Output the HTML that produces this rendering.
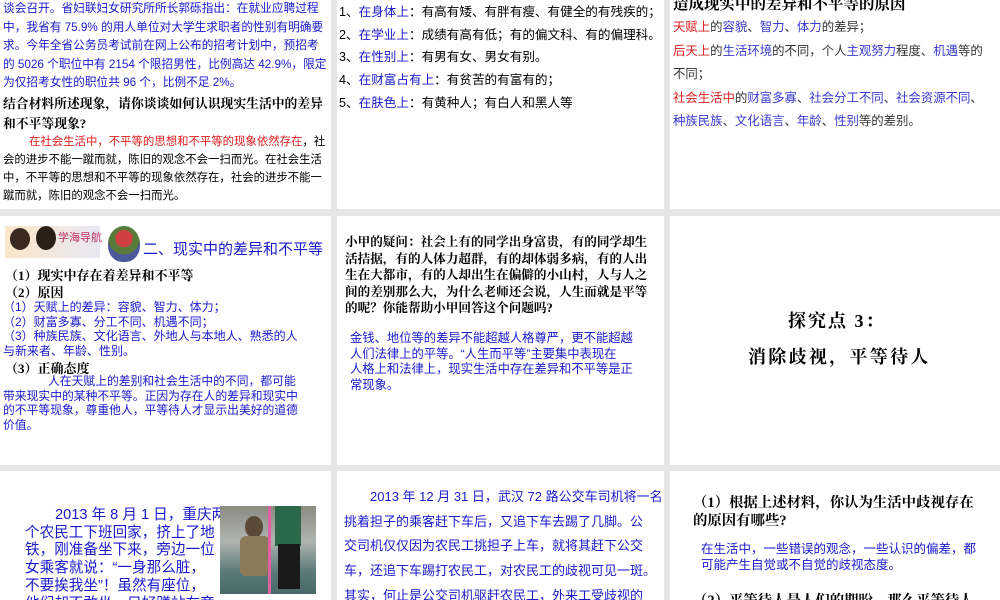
<!DOCTYPE html>
<html><head><meta charset="utf-8"><style>
*{margin:0;padding:0;box-sizing:border-box}
body{width:1000px;height:600px;background:#e6e6e6;position:relative;overflow:hidden;font-family:"Liberation Sans","Noto Sans CJK SC",sans-serif}
.p{position:absolute;background:#fff;overflow:hidden}
.a{position:absolute;white-space:nowrap}
.b{color:#1a1acc}.r{color:#e02020}.k{color:#000}.bl{color:#3a3ad0}
.s{font-family:"Liberation Serif","Noto Serif CJK SC",serif;font-weight:bold}
</style></head><body>

<div class="p" style="left:0;top:0;width:331px;height:209px">
 <div class="a b" style="left:3px;top:0px;font-size:11.7px;line-height:18.5px">谈会召开。省妇联妇女研究所所长郭砾指出：在就业应聘过程<br>中，我省有 75.9% 的用人单位对大学生求职者的性别有明确要<br>求。今年全省公务员考试前在网上公布的招考计划中，预招考<br>的 5026 个职位中有 2154 个限招男性，比例高达 42.9%，限定<br>为仅招考女性的职位共 96 个，比例不足 2%。</div>
 <div class="a k s" style="left:3px;top:94px;font-size:12.8px;line-height:20px">结合材料所述现象，请你谈谈如何认识现实生活中的差异<br>和不平等现象?</div>
 <div class="a k" style="left:3px;top:133px;font-size:11.4px;line-height:18px"><span style="padding-left:26px" class="r">在社会生活中，不平等的思想和不平等的现象依然存在</span>，社<br>会的进步不能一蹴而就，陈旧的观念不会一扫而光。在社会生活<br>中，不平等的思想和不平等的现象依然存在，社会的进步不能一<br>蹴而就，陈旧的观念不会一扫而光。</div>
</div>

<div class="p" style="left:337px;top:0;width:327px;height:209px">
 <div class="a k" style="left:2px;top:1px;font-size:12.6px;line-height:22.7px">1、<span class="b">在身体上</span>：有高有矮、有胖有瘦、有健全的有残疾的；<br>2、<span class="b">在学业上</span>：成绩有高有低；有的偏文科、有的偏理科。<br>3、<span class="b">在性别上</span>：有男有女、男女有别。<br>4、<span class="b">在财富占有上</span>：有贫苦的有富有的；<br>5、<span class="b">在肤色上</span>：有黄种人；有白人和黑人等</div>
</div>

<div class="p" style="left:670px;top:0;width:330px;height:209px">
 <div class="a k s" style="left:3px;top:-8px;font-size:15.5px">造成现实中的差异和不平等的原因</div>
 <div class="a" style="left:3px;top:16px;font-size:12.4px;line-height:23.5px;color:#333"><span class="r">天赋上</span>的<span class="bl">容貌</span>、<span class="bl">智力</span>、<span class="bl">体力</span>的差异；<br><span class="r">后天上</span>的<span class="bl">生活环境</span>的不同，个人<span class="bl">主观努力</span>程度、<span class="bl">机遇</span>等的<br>不同；<br><span class="r">社会生活中</span>的<span class="bl">财富多寡</span>、<span class="bl">社会分工不同</span>、<span class="bl">社会资源不同</span>、<br><span class="bl">种族民族</span>、<span class="bl">文化语言</span>、<span class="bl">年龄</span>、<span class="bl">性别</span>等的差别。</div>
</div>

<div class="p" style="left:0;top:216px;width:331px;height:249px">
 <div class="a" style="left:5px;top:10px;width:95px;height:32px;background:linear-gradient(90deg,#fbe7c8,#e8e8f4)"></div>
 <div class="a" style="left:10px;top:12px;width:20px;height:22px;border-radius:50%;background:#3a2a20"></div>
 <div class="a" style="left:36px;top:10px;width:20px;height:24px;border-radius:50%;background:#2a2018"></div>
 <div class="a" style="left:58px;top:13px;font-size:11px;color:#c03060">学海导航</div>
 <div class="a" style="left:108px;top:10px;width:32px;height:36px;border-radius:50% 50% 45% 45%;background:radial-gradient(circle at 50% 35%,#d04040 0 30%,#5a7a3a 31% 55%,#4a5a9a 56%)"></div>
 <div class="a b" style="left:143px;top:22px;font-size:15px">二、现实中的差异和不平等</div>
 <div class="a k s" style="left:5px;top:51px;font-size:13px;line-height:17px">（1）现实中存在着差异和不平等<br>（2）原因</div>
 <div class="a b" style="left:3px;top:84px;font-size:12px;line-height:14.5px">（1）天赋上的差异：容貌、智力、体力；<br>（2）财富多寡、分工不同、机遇不同；<br>（3）种族民族、文化语言、外地人与本地人、熟悉的人<br>与新来者、年龄、性别。</div>
 <div class="a k s" style="left:5px;top:142px;font-size:13px">（3）正确态度</div>
 <div class="a b" style="left:3px;top:158px;font-size:11.8px;line-height:14.5px"><span style="padding-left:45px"></span>人在天赋上的差别和社会生活中的不同，都可能<br>带来现实中的某种不平等。正因为存在人的差异和现实中<br>的不平等现象，尊重他人，平等待人才显示出美好的道德<br>价值。</div>
</div>

<div class="p" style="left:337px;top:216px;width:327px;height:249px">
 <div class="a k s" style="left:8px;top:18px;font-size:12.6px;line-height:16.5px">小甲的疑问：社会上有的同学出身富贵，有的同学却生<br>活拮据，有的人体力超群，有的却体弱多病，有的人出<br>生在大都市，有的人却出生在偏僻的小山村，人与人之<br>间的差别那么大，为什么老师还会说，人生而就是平等<br>的呢？你能帮助小甲回答这个问题吗?</div>
 <div class="a b" style="left:13px;top:115px;font-size:12.3px;line-height:15.5px">金钱、地位等的差异不能超越人格尊严，更不能超越<br>人们法律上的平等。“人生而平等”主要集中表现在<br>人格上和法律上，现实生活中存在差异和不平等是正<br>常现象。</div>
</div>

<div class="p" style="left:670px;top:216px;width:330px;height:249px">
 <div class="a k s" style="left:118px;top:91px;font-size:18px;letter-spacing:2px">探究点 3：</div>
 <div class="a k s" style="left:78px;top:127px;font-size:18px;letter-spacing:2.3px">消除歧视，平等待人</div>
</div>

<div class="p" style="left:0;top:471px;width:331px;height:129px">
 <div class="a b" style="left:25px;top:36px;font-size:14.6px;line-height:17.7px"><span style="padding-left:30px"></span>2013 年 8 月 1 日，重庆两<br>个农民工下班回家，挤上了地<br>铁，刚准备坐下来，旁边一位<br>女乘客就说：“一身那么脏，<br>不要挨我坐”！虽然有座位，<br>他们却不敢坐，只好蹲站在旁</div>
 <div class="a" style="left:220px;top:35px;width:96px;height:88px;background:linear-gradient(180deg,#8a8a80 0%,#b0b4b0 40%,#5a7a78 75%,#4a6a6a 100%)">
  <div class="a" style="left:25px;top:10px;width:18px;height:22px;border-radius:50%;background:#5a4a3a"></div>
  <div class="a" style="left:20px;top:30px;width:30px;height:40px;background:#8a7a5a;border-radius:6px"></div>
  <div class="a" style="left:55px;top:0;width:26px;height:40px;background:#2a6a4a"></div>
  <div class="a" style="left:58px;top:38px;width:22px;height:45px;background:#1a1a1a"></div>
  <div class="a" style="left:48px;top:0;width:3px;height:88px;background:#e060a0"></div>
 </div>
</div>

<div class="p" style="left:337px;top:471px;width:327px;height:129px">
 <div class="a b" style="left:7px;top:14px;font-size:13px;line-height:24.7px"><span style="padding-left:26px"></span>2013 年 12 月 31 日，武汉 72 路公交车司机将一名<br>挑着担子的乘客赶下车后，又追下车去踢了几脚。公<br>交司机仅仅因为农民工挑担子上车，就将其赶下公交<br>车，还追下车踢打农民工，对农民工的歧视可见一斑。<br>其实，何止是公交司机驱赶农民工，外来工受歧视的</div>
</div>

<div class="p" style="left:670px;top:471px;width:330px;height:129px">
 <div class="a k s" style="left:23px;top:23px;font-size:14.4px;line-height:18px">（1）根据上述材料，你认为生活中歧视存在<br>的原因有哪些?</div>
 <div class="a b" style="left:31px;top:70px;font-size:12.5px;line-height:16px">在生活中，一些错误的观念，一些认识的偏差，都<br>可能产生自觉或不自觉的歧视态度。</div>
 <div class="a k s" style="left:23px;top:118px;font-size:14.4px">（2）平等待人是人们的期盼，那么平等待人</div>
</div>

</body></html>
